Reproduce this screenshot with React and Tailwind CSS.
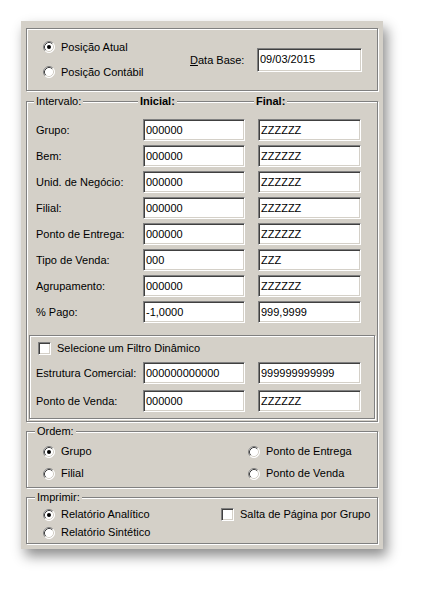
import React from "react";

const sunken =
  "bg-white border border-t-[#808080] border-l-[#808080] border-r-white border-b-white shadow-[inset_1px_1px_0_#404040,inset_-1px_-1px_0_#d4d0c8]";
const etched = "border border-[#808080] shadow-[inset_1px_1px_0_#fff,1px_1px_0_#fff]";

function Radio({ checked, label }) {
  return (
    <div className="flex items-center gap-[6px] h-[13px]">
      <svg width="12" height="12" viewBox="0 0 12 12" className="shrink-0">
        <circle cx="6" cy="6" r="5.5" fill="#fff" />
        <path d="M2.11 9.89 A5.5 5.5 0 0 1 9.89 2.11" stroke="#808080" fill="none" />
        <path d="M2.82 9.18 A4.5 4.5 0 0 1 9.18 2.82" stroke="#404040" fill="none" />
        <path d="M9.89 2.11 A5.5 5.5 0 0 1 2.11 9.89" stroke="#ffffff" fill="none" />
        <path d="M9.18 2.82 A4.5 4.5 0 0 1 2.82 9.18" stroke="#d4d0c8" fill="none" />
        {checked && <circle cx="6" cy="6" r="2" fill="#000" />}
      </svg>
      <span>{label}</span>
    </div>
  );
}

function Check({ label }) {
  return (
    <div className="flex items-center gap-[6px]">
      <div className={`w-[13px] h-[13px] shrink-0 ${sunken}`} />
      <span>{label}</span>
    </div>
  );
}

function Field({ value }) {
  return (
    <div className={`h-[22px] flex items-center pl-[2px] ${sunken}`}>{value}</div>
  );
}

function Row({ label, from, to }) {
  return (
    <>
      <div className="flex items-center h-[22px] whitespace-nowrap">{label}</div>
      <Field value={from} />
      <Field value={to} />
    </>
  );
}

const rows = [
  ["Grupo:", "000000", "ZZZZZZ"],
  ["Bem:", "000000", "ZZZZZZ"],
  ["Unid. de Negócio:", "000000", "ZZZZZZ"],
  ["Filial:", "000000", "ZZZZZZ"],
  ["Ponto de Entrega:", "000000", "ZZZZZZ"],
  ["Tipo de Venda:", "000", "ZZZ"],
  ["Agrupamento:", "000000", "ZZZZZZ"],
  ["% Pago:", "-1,0000", "999,9999"],
];

export default function App() {
  return (
    <div className="min-h-[592px] bg-white pt-[21px] pl-[21px] font-['Liberation_Sans',Arial,sans-serif] text-[11px] leading-[13px] text-black">
      <div className="w-[362px] h-[528px] bg-[#d4d0c8] px-[5px] pt-[7px] shadow-[4px_7px_12px_rgba(0,0,0,0.45)]">
        {/* Posição */}
        <div className={`h-[63px] flex items-center pl-[16px] ${etched}`}>
          <div className="w-[147px] flex flex-col gap-[12px]">
            <Radio checked label="Posição Atual" />
            <Radio label="Posição Contábil" />
          </div>
          <div className="w-[67px] pt-[2px]">
            <span className="underline">D</span>ata Base:
          </div>
          <div className={`w-[105px] h-[24px] flex items-center pl-[2px] ${sunken}`}>09/03/2015</div>
        </div>

        {/* Intervalo: header labels sit on the top border line */}
        <div className={`mt-[10px] px-[2px] pb-[2px] ${etched}`}>
          <div className="-mt-[7px] grid grid-cols-[109px_116px_1fr] h-[13px]">
            <div>
              <span className="ml-[5px] px-[2px] bg-[#d4d0c8]">Intervalo:</span>
            </div>
            <div>
              <span className="px-[2px] bg-[#d4d0c8] font-bold">Inicial:</span>
            </div>
            <div>
              <span className="px-[2px] bg-[#d4d0c8] font-bold">Final:</span>
            </div>
          </div>
          <div className="grid grid-cols-[94px_102px_103px] gap-x-[13px] gap-y-[4px] pl-[7px] pt-[11px]">
            {rows.map(([l, a, b]) => (
              <Row key={l} label={l} from={a} to={b} />
            ))}
          </div>
          <div className={`mt-[12px] h-[84px] pl-[6px] pt-[6px] ${etched}`}>
            <div className="pl-[2px]">
              <Check label="Selecione um Filtro Dinâmico" />
            </div>
            <div className="grid grid-cols-[94px_102px_103px] gap-x-[13px] gap-y-[6px] pt-[7px]">
              <Row label="Estrutura Comercial:" from="000000000000" to="999999999999" />
              <Row label="Ponto de Venda:" from="000000" to="ZZZZZZ" />
            </div>
          </div>
        </div>

        {/* Ordem */}
        <fieldset className={`mt-[3px] pb-[7px] ${etched}`}>
          <legend className="ml-[8px] px-[2px] bg-[#d4d0c8]">Ordem:</legend>
          <div className="grid grid-cols-[205px_1fr] gap-y-[9px] pl-[16px] pt-[7px]">
            <Radio checked label="Grupo" />
            <Radio label="Ponto de Entrega" />
            <Radio label="Filial" />
            <Radio label="Ponto de Venda" />
          </div>
        </fieldset>

        {/* Imprimir */}
        <fieldset className={`mt-[3px] pb-[4px] ${etched}`}>
          <legend className="ml-[8px] px-[2px] bg-[#d4d0c8]">Imprimir:</legend>
          <div className="grid grid-cols-[178px_1fr] gap-y-[5px] pl-[16px] pt-[4px]">
            <Radio checked label="Relatório Analítico" />
            <Check label="Salta de Página por Grupo" />
            <Radio label="Relatório Sintético" />
          </div>
        </fieldset>
      </div>
    </div>
  );
}
